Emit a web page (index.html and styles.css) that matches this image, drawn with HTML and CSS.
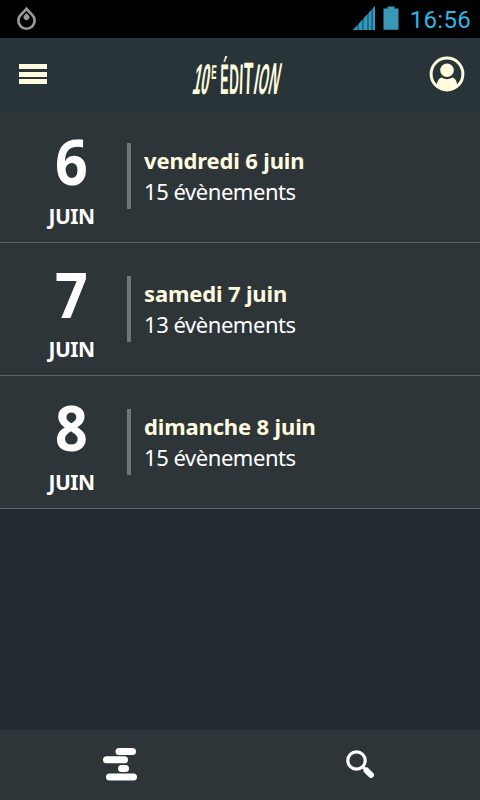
FILE: index.html
```html
<!DOCTYPE html>
<html lang="fr">
<head>
    <meta charset="UTF-8">
    <meta name="viewport" content="width=device-width, initial-scale=1.0">
    <title>10e Édition</title>
    <link rel="stylesheet" href="styles.css">
</head>
<body>
    <div class="status-bar">
        <svg class="drop" width="20" height="26" viewBox="0 0 20 26">
            <path d="M9.5 2.8 L3.9 8.8 A8.1 8.1 0 1 0 15.1 8.8 Z" fill="none" stroke="#999" stroke-width="2.7"/>
            <path d="M9.5 7 L7.4 9.3 A2.9 2.9 0 1 0 11.6 9.3 Z" fill="#999"/>
        </svg>
        <div class="status-icons">
            <svg width="22" height="24" viewBox="0 0 22 24">
                <path d="M0 24 L22 0 V24 Z" fill="#1c6c8a"/>
                <path d="M0 24 L4 19.6 V24 Z M6 24 V17.5 L9 14.2 V24 Z M11 24 V12 L14 8.7 V24 Z M16 24 V6.5 L18 4.4 V24 Z M20 24 V2.2 L22 0 V24 Z" fill="#3597b9"/>
            </svg>
            <svg width="16" height="24" viewBox="0 0 16 24">
                <path d="M4.5 0.5 H11.5 V2.5 H15.5 V23.7 H0.5 V2.5 H4.5 Z" fill="#3b97b7"/>
            </svg>
            <span class="clock">16:56</span>
        </div>
    </div>

    <header class="header">
        <button class="menu-btn" aria-label="Menu"><span></span><span></span><span></span></button>
        <svg class="logo" width="94" height="46" viewBox="0 0 94 46">
            <text transform="translate(1.5 43) skewX(-10) scale(.34 1)">1</text>
            <text transform="translate(9.8 43) skewX(-8) scale(.34 1)">0</text>
            <text class="exp" transform="translate(21 28) skewX(-3) scale(.4 1)">E</text>
            <text transform="translate(30 43) skewX(-1) scale(.29 1)">É</text>
            <text transform="translate(39 43) skewX(-1) scale(.31 1)">D</text>
            <text transform="translate(48.7 43) skewX(-2) scale(.33 1)">I</text>
            <text transform="translate(53 43) skewX(-2) scale(.36 1.06)">T</text>
            <text transform="translate(62.6 43) skewX(-9) scale(.34 1)">I</text>
            <text transform="translate(67 43) skewX(-9) scale(.29 1)">O</text>
            <text transform="translate(77 43) skewX(-11) scale(.33 1.04)">N</text>
        </svg>
        <svg class="user" width="36" height="36" viewBox="0 0 36 36">
            <circle cx="18" cy="18" r="15.9" fill="none" stroke="#fffbdf" stroke-width="3"/>
            <circle cx="18" cy="14.3" r="6.8" fill="#fffbdf"/>
            <path d="M7.5 30 C8.5 24.5 9.5 22.7 12.5 21.5 Q18 24.8 23.5 21.5 C26.5 22.7 27.5 24.5 28.5 30 Q18 37 7.5 30 Z" fill="#fffbdf"/>
        </svg>
    </header>

    <main class="days">
        <div class="day">
            <div class="date">
                <div class="number">6</div>
                <div class="month">JUIN</div>
            </div>
            <div class="info">
                <div class="title">vendredi 6 juin</div>
                <div class="count">15 évènements</div>
            </div>
        </div>
        <div class="day">
            <div class="date">
                <div class="number">7</div>
                <div class="month">JUIN</div>
            </div>
            <div class="info">
                <div class="title">samedi 7 juin</div>
                <div class="count">13 évènements</div>
            </div>
        </div>
        <div class="day">
            <div class="date">
                <div class="number">8</div>
                <div class="month">JUIN</div>
            </div>
            <div class="info">
                <div class="title">dimanche 8 juin</div>
                <div class="count">15 évènements</div>
            </div>
        </div>
    </main>

    <nav class="tabs">
        <button class="tab" aria-label="Programme">
            <svg width="36" height="34" viewBox="0 0 36 34" fill="#fff">
                <rect x="13.5" y="1" width="20.5" height="7" rx="3.5"/>
                <rect x="1" y="9.2" width="25" height="7" rx="3.5"/>
                <rect x="16" y="18" width="11" height="7" rx="3.5"/>
                <rect x="4" y="26.5" width="31" height="7" rx="3.5"/>
            </svg>
        </button>
        <button class="tab" aria-label="Recherche">
            <svg width="30" height="30" viewBox="0 0 30 30">
                <circle cx="11.5" cy="11.5" r="8.7" fill="none" stroke="#fff" stroke-width="3.2"/>
                <path d="M17.5 17.5 L20 20" stroke="#fff" stroke-width="3"/>
                <path d="M21.5 21.5 L26 26" stroke="#fff" stroke-width="6" stroke-linecap="round"/>
            </svg>
        </button>
    </nav>
</body>
</html>
```
FILE: styles.css
```css
* {
    box-sizing: border-box;
}
body {
    display: flex;
    flex-direction: column;
    height: 800px;
    margin: 0;
    background-color: #222930;
    color: #fff;
    font-family: "Noto Sans", sans-serif;
}
button {
    padding: 0;
    border: none;
    background: none;
}
.status-bar {
    display: flex;
    justify-content: space-between;
    height: 38px;
    padding: 6px 9px 0 17px;
    background-color: #000;
}
.status-icons {
    display: flex;
    gap: 8px;
}
.clock {
    width: 62px;
    margin-left: 2px;
    color: #33b5e5;
    font-family: Roboto, sans-serif;
    font-size: 24px;
    line-height: 28px;
    letter-spacing: 0.3px;
    text-align: right;
}
.header {
    display: flex;
    align-items: center;
    justify-content: space-between;
    height: 72px;
    padding: 0 15px 0 19px;
    background-color: #293438;
}
.menu-btn {
    display: flex;
    flex-direction: column;
    gap: 2.5px;
    width: 28px;
}
.menu-btn span {
    height: 5px;
    background-color: #fffbdf;
}
.logo {
    margin-left: -2px;
    overflow: visible;
    fill: #fffbdf;
    font-family: "Liberation Sans", sans-serif;
    font-size: 43px;
    font-weight: bold;
}
.logo .exp {
    font-size: 20px;
}
.days {
    flex: 1;
}
.day {
    display: flex;
    align-items: center;
    height: 133px;
    border-bottom: 1px solid #5d6467;
    background-color: #2d3538;
}
.date {
    width: 127px;
    padding: 6px 0 0 16px;
    text-align: center;
    font-weight: bold;
}
.number {
    font-size: 63px;
    line-height: 74px;
    transform: translateY(-1px) scaleX(0.91);
}
.month {
    font-size: 21px;
    line-height: 34px;
    letter-spacing: -0.5px;
}
.info {
    height: 66px;
    padding: 2px 0 0 13px;
    border-left: 4px solid #737575;
    font-size: 22px;
    line-height: 31px;
}
.title {
    color: #fffbdf;
    font-weight: bold;
    letter-spacing: -0.15px;
}
.count {
    letter-spacing: -0.45px;
}
.tabs {
    display: flex;
    height: 70px;
    padding-bottom: 3px;
    background-color: #2d3538;
}
.tab {
    display: flex;
    flex: 1;
    align-items: center;
    justify-content: center;
}
```
